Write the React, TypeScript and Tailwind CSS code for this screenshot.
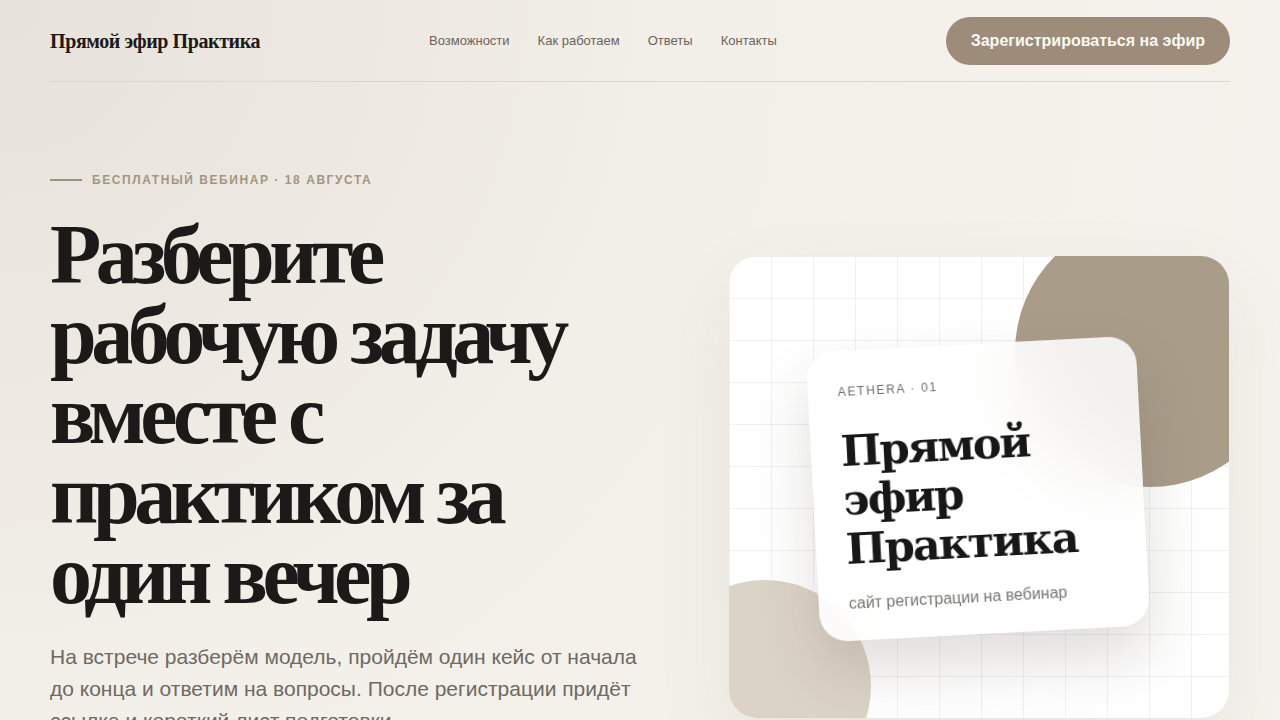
import React from 'react';

const navLinks = ['Возможности', 'Как работаем', 'Ответы', 'Контакты'];

function PreviewCard() {
    return (
        <div className="relative mt-[84px] h-[462px] w-[500px] overflow-hidden rounded-[28px] bg-white shadow-[0_30px_80px_rgba(90,70,50,0.08)]">
            {/* grid */}
            <div className="absolute inset-0 bg-[linear-gradient(to_right,rgba(0,0,0,0.055)_1px,transparent_1px),linear-gradient(to_bottom,rgba(0,0,0,0.055)_1px,transparent_1px)] bg-[size:42px_42px]" />

            {/* blobs */}
            <div className="absolute left-[286px] top-[-39px] h-[270px] w-[270px] rounded-full bg-[#a99d8a]" />
            <div className="absolute left-[-70px] top-[324px] h-[212px] w-[212px] rounded-full bg-[#dcd3c7]" />

            {/* frosted note */}
            <div className="absolute left-[84px] top-[88px] h-[290px] w-[330px] rotate-[-3deg] rounded-[28px] bg-white/85 px-[30px] pt-[32px] shadow-[0_30px_60px_rgba(60,45,30,0.16)] backdrop-blur-2xl">
                <div className="font-['Liberation_Sans',sans-serif] text-[12px] uppercase tracking-[0.14em] text-[#6e6c69]">
                    Aethera · 01
                </div>
                <h2 className="mt-[26px] font-['DejaVu_Serif',serif] text-[43px] font-bold leading-[49px] tracking-[-0.045em] text-[#171717]">
                    Прямой<br />эфир<br />Практика
                </h2>
                <p className="mt-[18px] font-['Liberation_Sans',sans-serif] text-[16px] text-[#777674]">
                    сайт регистрации на вебинар
                </p>
            </div>
        </div>
    );
}

export default function App() {
    return (
        <div className="h-[720px] w-[1280px] overflow-hidden bg-[radial-gradient(circle_at_0%_0%,#e7e2da_0%,#f3f0ea_50%,#f6f3ee_100%)] font-['Liberation_Sans',sans-serif]">
            <div className="mx-[50px]">
                {/* Header */}
                <header className="flex h-[82px] items-center justify-between border-b border-[#dbd6ce]">
                    <div className="font-['Liberation_Serif',serif] text-[20px] font-bold tracking-[-0.02em] text-[#1c1a18]">
                        Прямой эфир Практика
                    </div>
                    <nav className="flex items-center gap-[28px] text-[13px] text-[#6b635b]">
                        {navLinks.map(link => (
                            <a key={link} href="#" className="hover:text-[#1c1a18]">{link}</a>
                        ))}
                    </nav>
                    <button className="h-[48px] rounded-full bg-[#9c8c79] px-[25px] text-[16px] font-bold text-[#fbf8f3]">
                        Зарегистрироваться на эфир
                    </button>
                </header>

                {/* Hero */}
                <section className="grid grid-cols-[1fr_500px] gap-[37px] pr-px pt-[90px]">
                    <div className="max-w-[612px]">
                        <div className="flex items-center gap-[10px]">
                            <span className="h-[2px] w-[32px] bg-[#a09080]" />
                            <span className="text-[12px] font-bold uppercase leading-[16px] tracking-[0.13em] text-[#a39582]">
                                Бесплатный вебинар · 18 августа
                            </span>
                        </div>
                        <h1 className="mt-[27px] font-['Liberation_Serif',serif] text-[84px] font-bold leading-[80px] tracking-[-0.065em] text-[#1b1a19]">
                            Разберите рабочую задачу вместе с практиком за один вечер
                        </h1>
                        <p className="mt-[26px] text-[21px] leading-[32px] text-[#6f6963]">
                            На встрече разберём модель, пройдём один кейс от начала до конца и ответим на вопросы. После регистрации придёт ссылка и короткий лист подготовки.
                        </p>
                    </div>
                    <PreviewCard />
                </section>
            </div>
        </div>
    );
}
